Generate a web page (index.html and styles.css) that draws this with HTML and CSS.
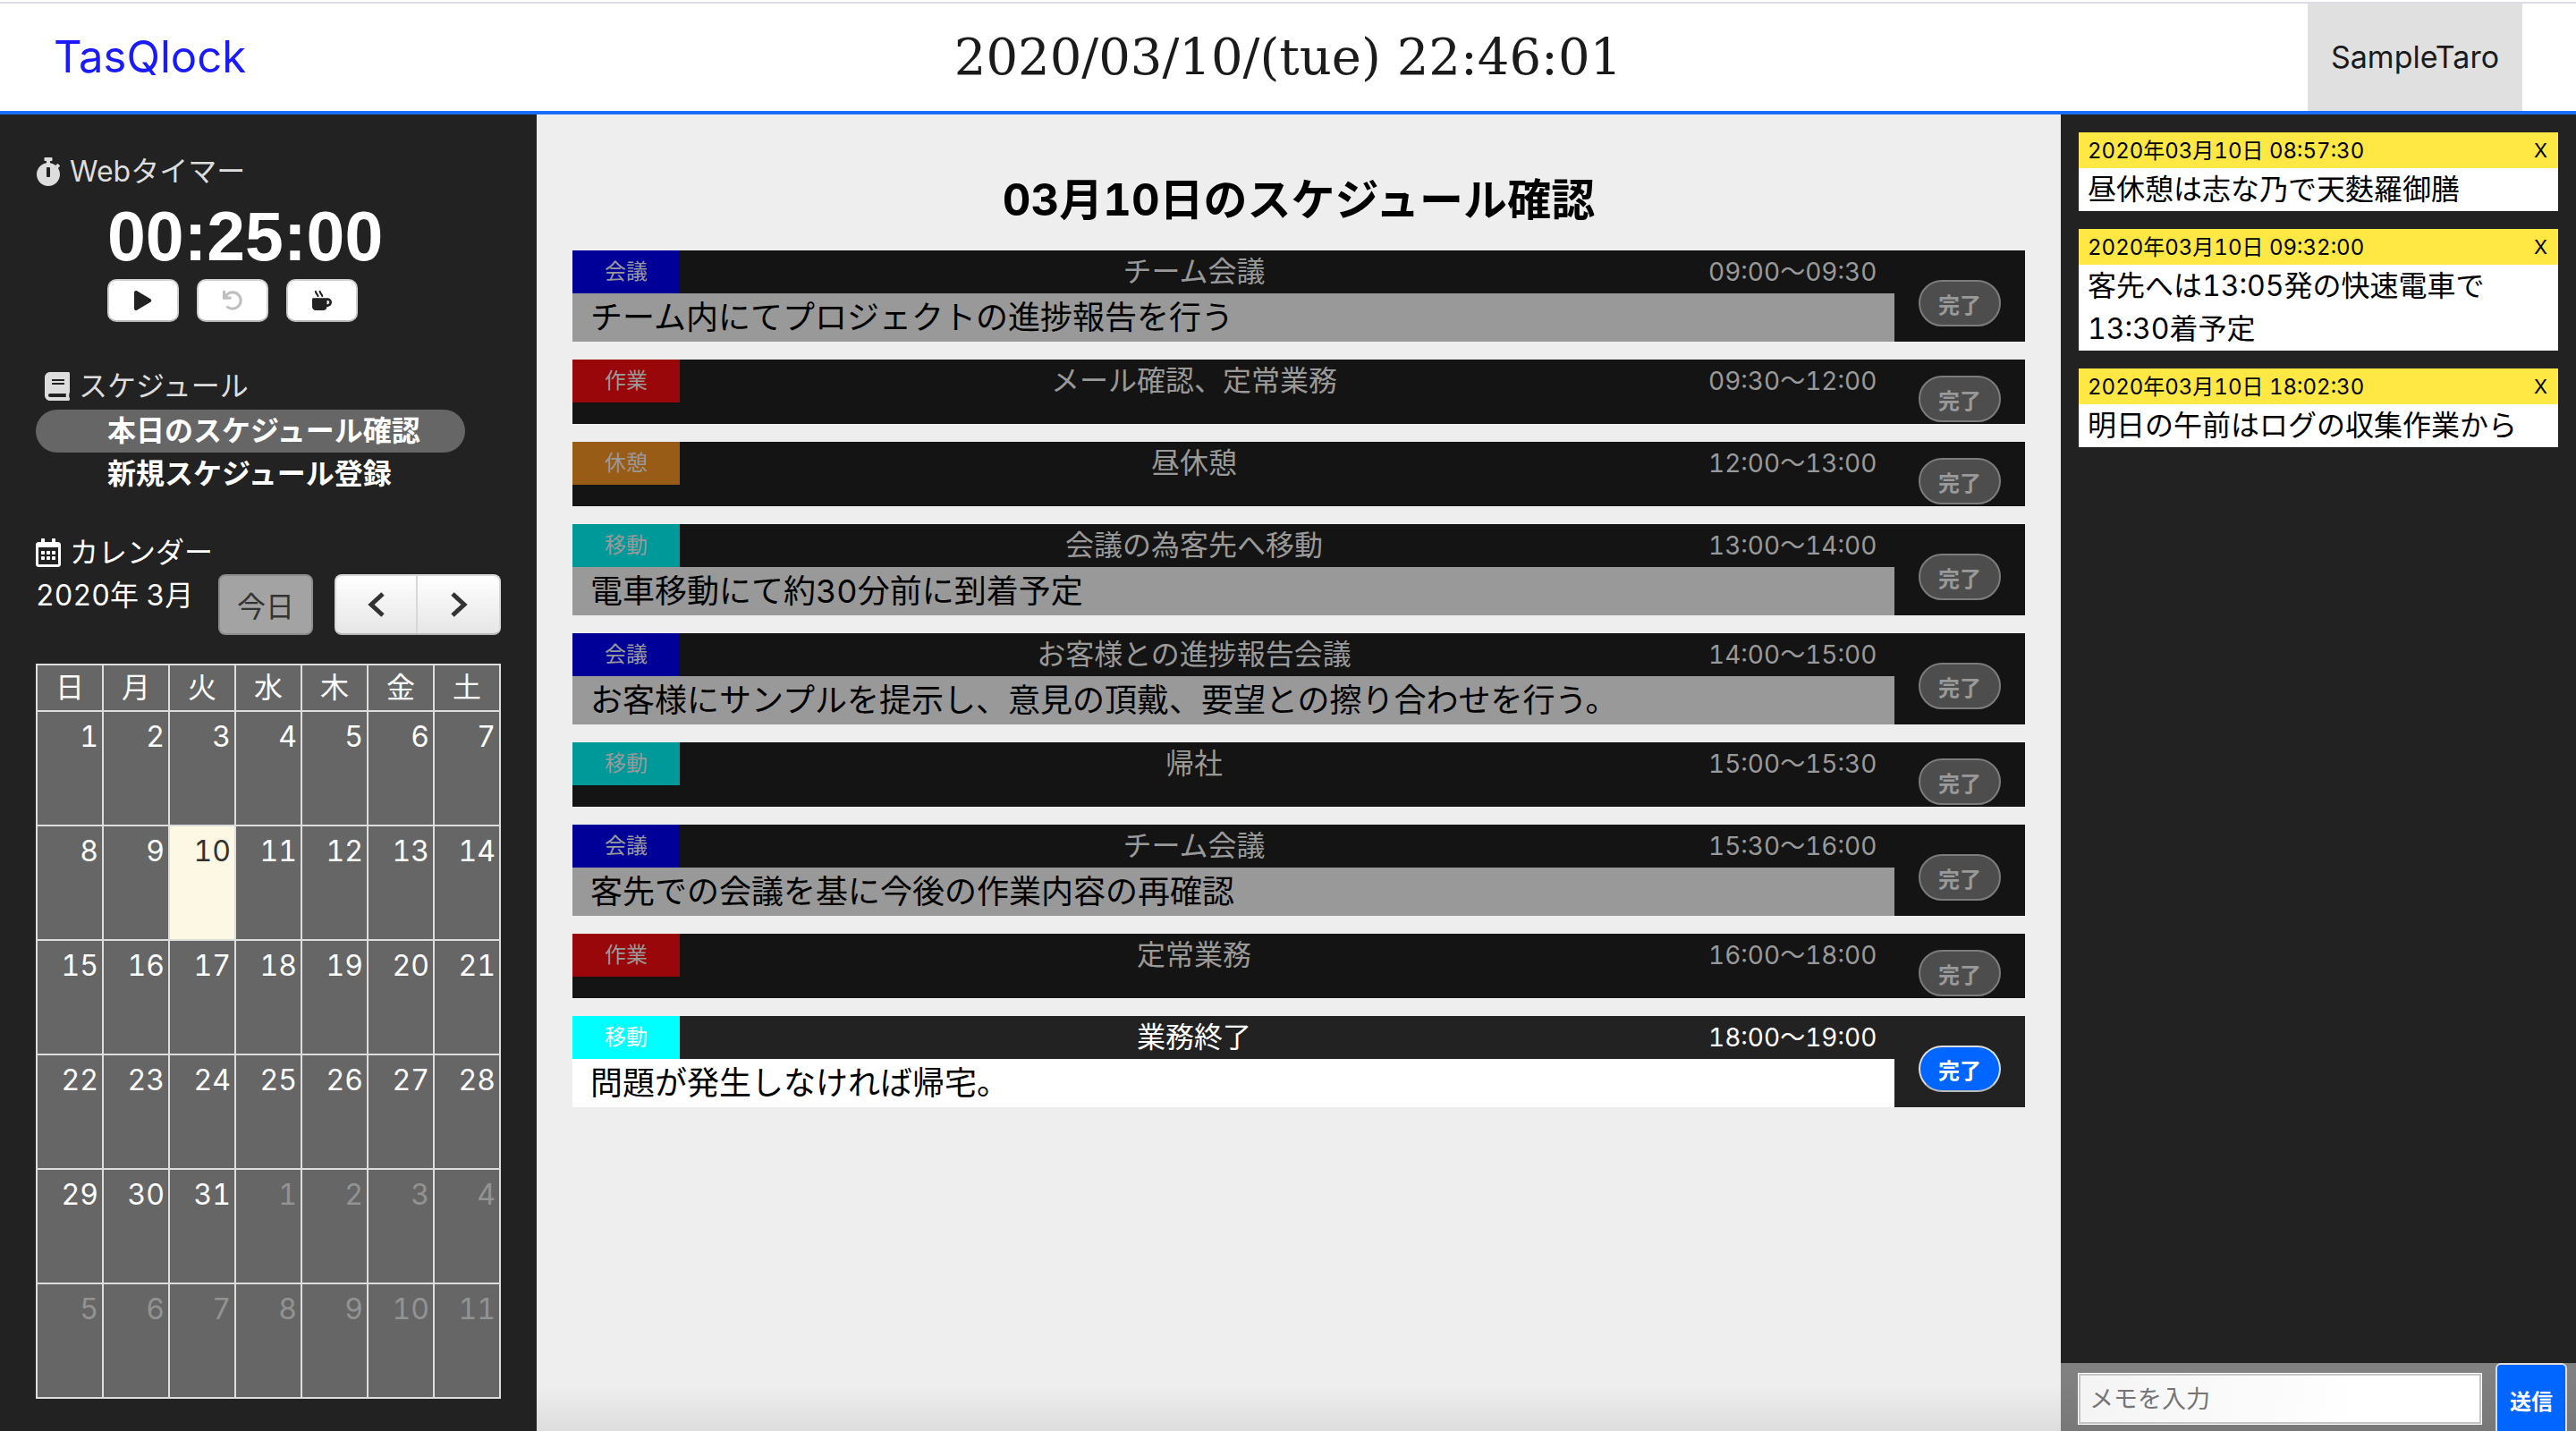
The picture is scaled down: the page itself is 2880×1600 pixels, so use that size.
FILE: index.html
```html
<!DOCTYPE html>
<html lang="ja">
<head>
<meta charset="utf-8">
<meta name="viewport" content="width=device-width, initial-scale=1">
<title>TasQlock</title>
<link rel="stylesheet" href="styles.css">
</head>
<body>
<header class="topbar">
  <a class="logo" href="#">TasQlock</a>
  <time class="clock" datetime="2020-03-10T22:46:01">2020/03/10/(tue) 22:46:01</time>
  <a class="user" href="#">SampleTaro</a>
</header>
<div class="layout">
  <aside class="sidebar">
    <section class="timer">
      <h2 class="section-title muted">
        <svg class="icon" viewBox="0 0 448 512" aria-hidden="true"><path d="M432 304c0 114.9-93.1 208-208 208S16 418.9 16 304c0-104 76.3-190.2 176-205.5V64h-28c-6.6 0-12-5.4-12-12V12c0-6.6 5.4-12 12-12h120c6.6 0 12 5.4 12 12v40c0 6.6-5.4 12-12 12h-28v34.5c37.5 5.8 71.7 21.6 99.7 44.6l27.5-27.5c4.7-4.7 12.3-4.7 17 0l28.3 28.3c4.7 4.7 4.7 12.3 0 17l-29.4 29.4-.6.6C419.7 223.3 432 262.2 432 304zm-176 36V188.5c0-6.6-5.4-12-12-12h-40c-6.6 0-12 5.4-12 12V340c0 6.6 5.4 12 12 12h40c6.6 0 12-5.4 12-12z"/></svg>
        Webタイマー
      </h2>
      <p class="countdown">00:25:00</p>
      <div class="timer-buttons">
        <button class="timer-button" type="button" aria-label="開始"><svg viewBox="0 0 448 512" aria-hidden="true"><path d="M424.4 214.7L72.4 6.6C43.8-10.3 0 6.1 0 47.9V464c0 37.5 40.7 60.1 72.4 41.3l352-208c31.4-18.5 31.5-64.1 0-82.6z"/></svg></button>
        <button class="timer-button" type="button" aria-label="リセット" disabled><svg viewBox="0 0 512 512" aria-hidden="true"><path d="M212.333 224.333H12c-6.627 0-12-5.373-12-12V12C0 5.373 5.373 0 12 0h48c6.627 0 12 5.373 12 12v78.112C117.773 39.279 184.26 7.47 258.175 8.007c136.906.994 246.448 111.623 246.157 248.532C504.041 393.258 393.12 504 256.333 504c-64.089 0-122.496-24.313-166.51-64.215-5.099-4.622-5.334-12.554-.467-17.42l33.967-33.967c4.474-4.474 11.662-4.717 16.401-.525C170.76 415.336 211.58 432 256.333 432c97.268 0 176-78.716 176-176 0-97.267-78.716-176-176-176-58.496 0-110.28 28.476-142.274 72.333h98.274c6.627 0 12 5.373 12 12v48c0 6.627-5.373 12-12 12z"/></svg></button>
        <button class="timer-button" type="button" aria-label="休憩"><svg viewBox="0 0 512 512" aria-hidden="true"><path d="M127.1 146.5c1.3 7.7 8 13.5 16 13.5h16.5c9.8 0 17.6-8.5 16.3-18-3.8-28.2-16.4-54.2-36.6-74.7-14.4-14.7-23.6-33.3-26.4-53.5C111.8 5.9 105 0 96.8 0H80.4C70.6 0 63 8.5 64.1 18c3.9 31.9 18 61.3 40.6 84.4 12 12.2 19.7 27.5 22.4 44.1zm112 0c1.3 7.7 8 13.5 16 13.5h16.5c9.8 0 17.6-8.5 16.3-18-3.8-28.2-16.4-54.2-36.6-74.7-14.4-14.7-23.6-33.3-26.4-53.5C223.8 5.9 217 0 208.8 0h-16.4c-9.8 0-17.5 8.5-16.3 18 3.9 31.9 18 61.3 40.6 84.4 12 12.2 19.7 27.5 22.4 44.1zM400 192H32c-17.7 0-32 14.3-32 32v192c0 53 43 96 96 96h192c53 0 96-43 96-96h16c61.8 0 112-50.2 112-112s-50.2-112-112-112zm0 160h-16v-96h16c26.5 0 48 21.5 48 48s-21.5 48-48 48z"/></svg></button>
      </div>
    </section>

    <nav class="menu">
      <h2 class="section-title menu-title muted">
        <svg class="icon" viewBox="0 0 448 512" aria-hidden="true"><path d="M448 360V24c0-13.3-10.7-24-24-24H96C43 0 0 43 0 96v320c0 53 43 96 96 96h328c13.3 0 24-10.7 24-24v-16c0-7.5-3.5-14.3-8.9-18.7-4.2-15.4-4.2-59.3 0-74.7 5.4-4.3 8.9-11.1 8.9-18.6zM128 134c0-3.3 2.7-6 6-6h212c3.3 0 6 2.7 6 6v20c0 3.3-2.7 6-6 6H134c-3.3 0-6-2.7-6-6v-20zm0 64c0-3.3 2.7-6 6-6h212c3.3 0 6 2.7 6 6v20c0 3.3-2.7 6-6 6H134c-3.3 0-6-2.7-6-6v-20zm253.4 250H96c-17.7 0-32-14.3-32-32 0-17.6 14.4-32 32-32h285.4c-1.9 17.1-1.9 46.9 0 64z"/></svg>
        スケジュール
      </h2>
      <a class="menu-link active" href="#">本日のスケジュール確認</a>
      <a class="menu-link" href="#">新規スケジュール登録</a>
    </nav>

    <section class="calendar">
      <h2 class="section-title">
        <svg class="icon" viewBox="0 0 448 512" aria-hidden="true"><path d="M148 288h-40c-6.6 0-12-5.4-12-12v-40c0-6.6 5.4-12 12-12h40c6.6 0 12 5.4 12 12v40c0 6.6-5.4 12-12 12zm108-12v-40c0-6.6-5.4-12-12-12h-40c-6.6 0-12 5.4-12 12v40c0 6.6 5.4 12 12 12h40c6.6 0 12-5.4 12-12zm96 0v-40c0-6.6-5.4-12-12-12h-40c-6.6 0-12 5.4-12 12v40c0 6.6 5.4 12 12 12h40c6.6 0 12-5.4 12-12zm-96 96v-40c0-6.6-5.4-12-12-12h-40c-6.6 0-12 5.4-12 12v40c0 6.6 5.4 12 12 12h40c6.6 0 12-5.4 12-12zm-96 0v-40c0-6.6-5.4-12-12-12h-40c-6.6 0-12 5.4-12 12v40c0 6.6 5.4 12 12 12h40c6.6 0 12-5.4 12-12zm192 0v-40c0-6.6-5.4-12-12-12h-40c-6.6 0-12 5.4-12 12v40c0 6.6 5.4 12 12 12h40c6.6 0 12-5.4 12-12zm96-260v352c0 26.5-21.5 48-48 48H48c-26.5 0-48-21.5-48-48V112c0-26.5 21.5-48 48-48h48V12c0-6.6 5.4-12 12-12h40c6.6 0 12 5.4 12 12v52h128V12c0-6.6 5.4-12 12-12h40c6.6 0 12 5.4 12 12v52h48c26.5 0 48 21.5 48 48zm-48 346V160H48v298c0 3.3 2.7 6 6 6h340c3.3 0 6-2.7 6-6z"/></svg>
        カレンダー
      </h2>
      <div class="calendar-bar">
        <span class="month">2020年 3月</span>
        <button class="cal-button today-button" type="button" disabled>今日</button>
        <div class="cal-group">
          <button class="cal-button" type="button" aria-label="前の月"><svg viewBox="0 0 20 30" aria-hidden="true"><path d="M17 3L4 15l13 12"/></svg></button>
          <button class="cal-button" type="button" aria-label="次の月"><svg viewBox="0 0 20 30" aria-hidden="true"><path d="M3 3l13 12L3 27"/></svg></button>
        </div>
      </div>
      <table class="month-table">
        <thead>
          <tr><th>日</th><th>月</th><th>火</th><th>水</th><th>木</th><th>金</th><th>土</th></tr>
        </thead>
        <tbody>
          <tr><td>1</td><td>2</td><td>3</td><td>4</td><td>5</td><td>6</td><td>7</td></tr>
          <tr><td>8</td><td>9</td><td class="today">10</td><td>11</td><td>12</td><td>13</td><td>14</td></tr>
          <tr><td>15</td><td>16</td><td>17</td><td>18</td><td>19</td><td>20</td><td>21</td></tr>
          <tr><td>22</td><td>23</td><td>24</td><td>25</td><td>26</td><td>27</td><td>28</td></tr>
          <tr><td>29</td><td>30</td><td>31</td><td class="other">1</td><td class="other">2</td><td class="other">3</td><td class="other">4</td></tr>
          <tr><td class="other">5</td><td class="other">6</td><td class="other">7</td><td class="other">8</td><td class="other">9</td><td class="other">10</td><td class="other">11</td></tr>
        </tbody>
      </table>
    </section>
  </aside>

  <main class="main">
    <h1 class="page-title">03月10日のスケジュール確認</h1>
    <div class="tasks">
      <article class="task done">
        <div class="task-body">
          <div class="task-head"><span class="tag meeting">会議</span><h3 class="task-title">チーム会議</h3><span class="task-time">09:00〜09:30</span></div>
          <p class="task-text">チーム内にてプロジェクトの進捗報告を行う</p>
        </div>
        <div class="task-side"><button class="done-button" type="button" disabled>完了</button></div>
      </article>
      <article class="task done">
        <div class="task-body">
          <div class="task-head"><span class="tag work">作業</span><h3 class="task-title">メール確認、定常業務</h3><span class="task-time">09:30〜12:00</span></div>
        </div>
        <div class="task-side"><button class="done-button" type="button" disabled>完了</button></div>
      </article>
      <article class="task done">
        <div class="task-body">
          <div class="task-head"><span class="tag rest">休憩</span><h3 class="task-title">昼休憩</h3><span class="task-time">12:00〜13:00</span></div>
        </div>
        <div class="task-side"><button class="done-button" type="button" disabled>完了</button></div>
      </article>
      <article class="task done">
        <div class="task-body">
          <div class="task-head"><span class="tag move">移動</span><h3 class="task-title">会議の為客先へ移動</h3><span class="task-time">13:00〜14:00</span></div>
          <p class="task-text">電車移動にて約30分前に到着予定</p>
        </div>
        <div class="task-side"><button class="done-button" type="button" disabled>完了</button></div>
      </article>
      <article class="task done">
        <div class="task-body">
          <div class="task-head"><span class="tag meeting">会議</span><h3 class="task-title">お客様との進捗報告会議</h3><span class="task-time">14:00〜15:00</span></div>
          <p class="task-text">お客様にサンプルを提示し、意見の頂戴、要望との擦り合わせを行う。</p>
        </div>
        <div class="task-side"><button class="done-button" type="button" disabled>完了</button></div>
      </article>
      <article class="task done">
        <div class="task-body">
          <div class="task-head"><span class="tag move">移動</span><h3 class="task-title">帰社</h3><span class="task-time">15:00〜15:30</span></div>
        </div>
        <div class="task-side"><button class="done-button" type="button" disabled>完了</button></div>
      </article>
      <article class="task done">
        <div class="task-body">
          <div class="task-head"><span class="tag meeting">会議</span><h3 class="task-title">チーム会議</h3><span class="task-time">15:30〜16:00</span></div>
          <p class="task-text">客先での会議を基に今後の作業内容の再確認</p>
        </div>
        <div class="task-side"><button class="done-button" type="button" disabled>完了</button></div>
      </article>
      <article class="task done">
        <div class="task-body">
          <div class="task-head"><span class="tag work">作業</span><h3 class="task-title">定常業務</h3><span class="task-time">16:00〜18:00</span></div>
        </div>
        <div class="task-side"><button class="done-button" type="button" disabled>完了</button></div>
      </article>
      <article class="task">
        <div class="task-body">
          <div class="task-head"><span class="tag move">移動</span><h3 class="task-title">業務終了</h3><span class="task-time">18:00〜19:00</span></div>
          <p class="task-text">問題が発生しなければ帰宅。</p>
        </div>
        <div class="task-side"><button class="done-button" type="button">完了</button></div>
      </article>
    </div>
  </main>

  <aside class="memos">
    <div class="memo-list">
      <article class="memo">
        <header class="memo-head"><time>2020年03月10日 08:57:30</time><button class="memo-close" type="button">X</button></header>
        <p class="memo-text">昼休憩は志な乃で天麩羅御膳</p>
      </article>
      <article class="memo">
        <header class="memo-head"><time>2020年03月10日 09:32:00</time><button class="memo-close" type="button">X</button></header>
        <p class="memo-text">客先へは13:05発の快速電車で13:30着予定</p>
      </article>
      <article class="memo">
        <header class="memo-head"><time>2020年03月10日 18:02:30</time><button class="memo-close" type="button">X</button></header>
        <p class="memo-text">明日の午前はログの収集作業から</p>
      </article>
    </div>
    <form class="memo-form">
      <input class="memo-input" type="text" placeholder="メモを入力" aria-label="メモを入力">
      <button class="send-button" type="button">送信</button>
    </form>
  </aside>
</div>
</body>
</html>
```

FILE: styles.css
```css
*, *::before, *::after { box-sizing: border-box; }

body {
  margin: 0;
  min-height: 100vh;
  display: flex;
  flex-direction: column;
  font-family: Inter, "Noto Sans CJK JP", sans-serif;
  font-size: 32px;
  font-variant-numeric: tabular-nums;
  line-height: 48px;
  color: #000;
  background: #fff;
}

h1, h2, h3, p { margin: 0; font-weight: 400; }
a { color: inherit; text-decoration: none; }
button, input { font-family: inherit; margin: 0; }

/* Header */
.topbar {
  display: grid;
  grid-template-columns: 1fr auto 1fr;
  align-items: center;
  margin-top: 2px;
  border-top: 2px solid #dcdce4;
  border-bottom: 4px solid #1a6eff;
  color: #1b1b1b;
}
.logo { padding-left: 60px; font-size: 49px; color: #1a1aff; }
.clock { font-family: "DejaVu Serif", serif; font-size: 56px; }
.user {
  justify-self: end;
  width: 240px;
  margin-right: 60px;
  font-size: 34px;
  line-height: 120px;
  text-align: center;
  background: #e0e0e0;
}

.layout {
  flex: 1;
  display: grid;
  grid-template-columns: 600px 1fr 20%;
}

/* Left column */
.sidebar {
  padding: 40px 40px 20px;
  display: flex;
  flex-direction: column;
  gap: 40px;
  color: #fff;
  background: #222;
}
.section-title {
  display: flex;
  align-items: center;
  gap: 10px;
  font-size: 32px;
}
.muted { color: #ddd; }
.icon { width: 28px; height: 32px; fill: currentColor; }
.countdown {
  padding-left: 80px;
  font-family: "Liberation Sans", sans-serif;
  font-size: 77px;
  font-weight: 700;
  line-height: 96px;
}
.timer-buttons { display: flex; gap: 20px; padding-left: 80px; }
.timer-button {
  display: flex;
  align-items: center;
  justify-content: center;
  width: 80px;
  height: 48px;
  padding: 0;
  border: 2px solid #d0d0d0;
  border-bottom-color: #b8b8b8;
  border-radius: 10px;
  background: #fff;
}
.timer-button svg { height: 22px; fill: #222; }
.timer-button:disabled svg { fill: #c0c0c0; }

.menu { padding-top: 8px; }
.menu-title { padding-left: 10px; margin-bottom: 2px; }
.menu-link {
  display: block;
  width: 480px;
  padding-left: 80px;
  border-radius: 24px;
  font-weight: 700;
}
.menu-link.active { background: #666; }

.calendar-bar { display: flex; align-items: flex-start; margin-bottom: 32px; }
.month { flex: 1; }
.cal-button {
  display: flex;
  align-items: center;
  justify-content: center;
  height: 68px;
  padding: 0;
  border: 2px solid #d8d8d8;
  border-bottom-color: #b8b8b8;
  border-radius: 8px;
  font-size: 32px;
  color: #333;
  background: linear-gradient(#fff, #e6e6e6);
}
.today-button {
  width: 106px;
  margin-right: 24px;
  border-color: #8c8c8c;
  color: #333;
  background: #a3a3a3;
}
.cal-group { display: flex; }
.cal-group .cal-button { width: 93px; }
.cal-group .cal-button:first-child { border-radius: 8px 0 0 8px; }
.cal-group .cal-button:last-child { border-left: 0; border-radius: 0 8px 8px 0; }
.cal-button svg { width: 20px; height: 30px; fill: none; stroke: #333; stroke-width: 5; }

.month-table {
  width: 100%;
  table-layout: fixed;
  border-collapse: collapse;
  background: #666;
}
.month-table th, .month-table td { border: 2px solid #ddd; padding: 0; font-weight: 400; }
.month-table th { height: 52px; }
.month-table td {
  height: 128px;
  padding: 4px;
  text-align: right;
  vertical-align: top;
}
.month-table .today { color: #333; background: #fcf8e3; }
.month-table .other { color: #939393; }

/* Schedule */
.main {
  padding: 60px 40px 40px;
  background: linear-gradient(to top, #ddd, #eee 50px);
}
.page-title {
  margin-bottom: 20px;
  font-size: 49px;
  font-weight: 700;
  line-height: 72px;
  text-align: center;
}
.tasks { display: flex; flex-direction: column; gap: 20px; }
.task { display: flex; min-height: 72px; color: #fff; background: #222; }
.task-body { flex: 1; }
.task-head { display: flex; }
.tag { width: 120px; font-size: 24px; text-align: center; }
.meeting { background: #00f; }
.work { background: #ff0c12; }
.rest { background: #ff9a24; }
.move { background: #0ff; }
.task-title { flex: 1; font-size: 32px; text-align: center; }
.task-time {
  width: 208px;
  padding-right: 20px;
  font-size: 28px;
  text-align: right;
  white-space: nowrap;
}
.task-text {
  padding-left: 20px;
  font-size: 36px;
  line-height: 54px;
  color: #000;
  background: #fff;
}
.task-side {
  width: 146px;
  padding-top: 16px;
  display: flex;
  align-items: center;
  justify-content: center;
}
.done-button {
  width: 92px;
  height: 52px;
  padding: 0;
  border: 2px solid #ddd;
  border-bottom-color: #bbb;
  border-radius: 26px;
  font-size: 24px;
  font-weight: 700;
  color: #fff;
  background: #06f;
}

.task.done { color: #999; background: #141414; }
.done .meeting { background: #009; }
.done .work { background: #99070b; }
.done .rest { background: #995c16; }
.done .move { background: #099; }
.done .task-text { background: #999; }
.done .done-button { color: #999; border-color: #7c7c7c; background: #4d4d4d; }

/* Memos */
.memos { display: flex; flex-direction: column; background: #222; }
.memo-list {
  flex: 1;
  padding: 20px;
  display: flex;
  flex-direction: column;
  gap: 20px;
}
.memo { background: #fff; }
.memo-head {
  display: flex;
  justify-content: space-between;
  padding: 0 10px;
  font-size: 24px;
  line-height: 42px;
  height: 40px;
  background: #ffe844;
}
.memo-close {
  padding: 0 2px;
  border: 0;
  font-size: 22px;
  color: #000;
  background: none;
}
.memo-text { padding: 0 10px; }
.memo-form {
  display: flex;
  align-items: center;
  gap: 16px;
  padding: 0 10px 0 20px;
  background: linear-gradient(#828282, #787878);
}
.memo-input {
  flex: 1;
  min-width: 0;
  height: 56px;
  margin-top: 4px;
  padding: 0 10px;
  border: 2px solid #c4c4c4;
  outline: 1px solid #fff;
  font-size: 27px;
  background: linear-gradient(100deg, #f4f4f4, #fff 70%);
}
.memo-input::placeholder { color: #757575; opacity: 1; }
.send-button {
  width: 80px;
  height: 76px;
  padding: 4px 0 0;
  border: 2px solid #ddd;
  border-bottom: 0;
  border-radius: 6px 6px 0 0;
  font-size: 24px;
  font-weight: 700;
  color: #fff;
  background: #06f;
}
```
